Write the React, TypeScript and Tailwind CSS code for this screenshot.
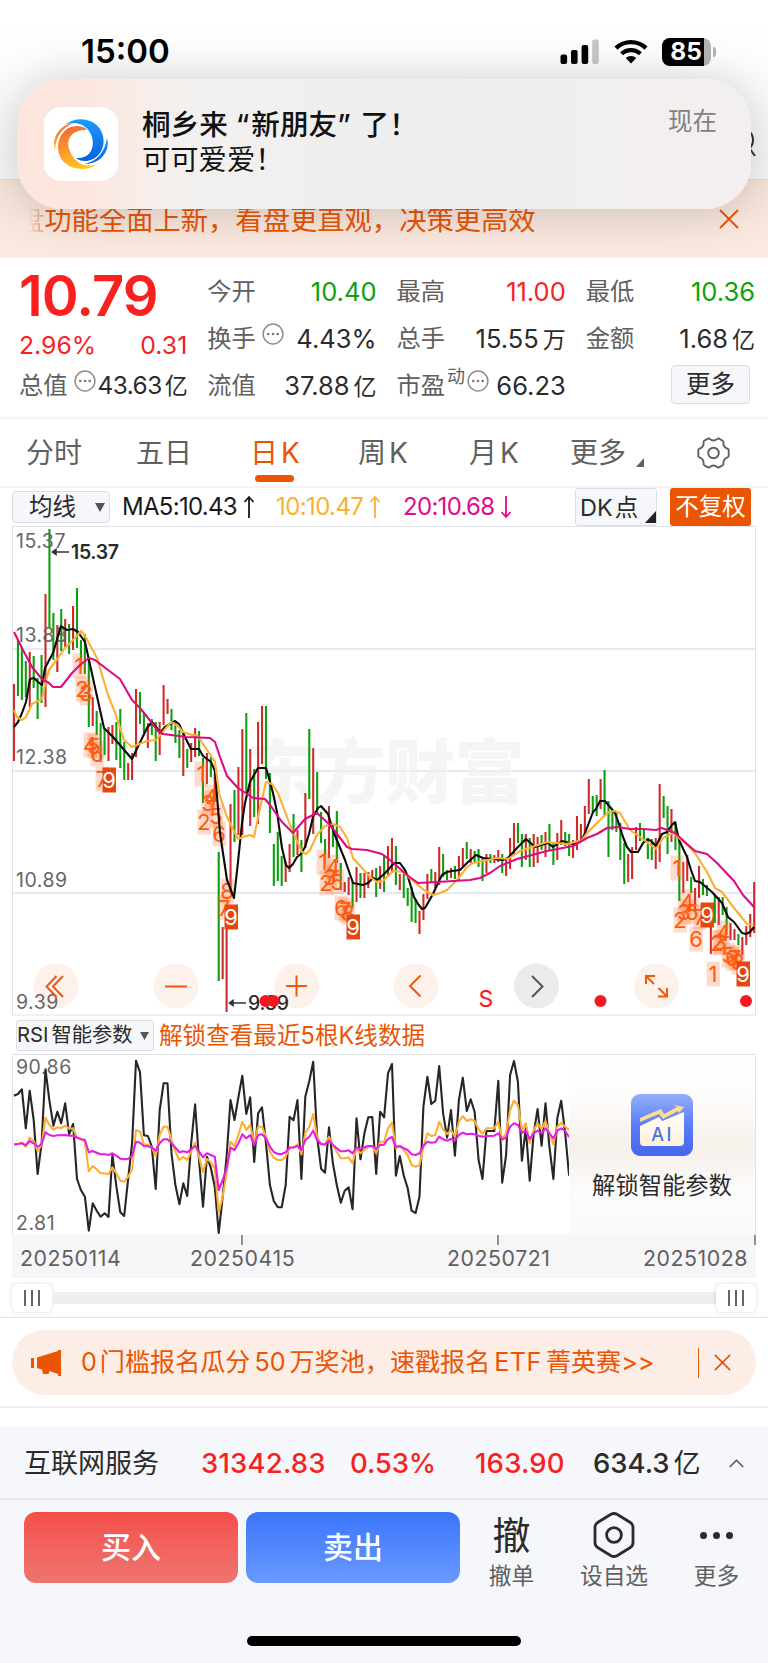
import React from 'react';

// 每根K线: 涨跌, 最高点, 最低点
const candles =
  'r684-761 g640-696 g647-700 g661-697 r652-707 g656-688 g678-719 g655-703 r594-707 g529-628 g613-660 r625-672 g609-651 r619-647 g624-654 r606-650 g588-648 g640-668 g634-674 g660-727 r697-726 g711-735 g723-762 g728-755 r727-761 r725-744 g722-760 g709-768 g742-780 r763-780 r753-780 r689-757 g692-724 g712-733 r723-748 g719-735 g722-761 r722-755 r685-725 r699-714 g709-730 g721-743 g730-758 r732-776 g749-768 r743-762 r728-757 g731-756 g758-803 r753-784 g757-777 r772-800 g852-981 r927-979 r923-1012 r804-890 g790-842 r767-835 r729-835 g713-793 r749-826 g769-817 r722-824 r706-764 g706-779 g773-833 g844-886 g832-881 g856-886 r862-882 r844-872 g814-857 r830-855 g840-872 r793-848 g729-799 r748-834 g772-815 g812-843 g839-864 r806-858 g825-847 g811-863 g863-890 r882-892 r877-895 g882-908 r867-902 g873-898 r873-898 r872-888 r870-880 g868-897 r866-889 g855-892 r846-875 r838-873 g846-885 r874-890 g874-898 g888-906 g887-922 g899-923 r911-934 r894-920 r874-899 g869-883 r872-888 r847-885 g854-877 g870-880 r868-878 g866-879 r856-880 r848-867 g842-859 r849-863 g851-862 g849-867 g859-881 r854-873 g854-863 r855-863 r850-862 g854-873 r858-876 r838-869 r823-854 g823-843 g834-867 r834-860 g838-867 r834-867 r837-863 g835-850 r832-857 g824-850 g843-865 r833-860 r820-845 g832-846 g834-856 r840-858 r816-850 r824-840 r806-837 r779-814 g796-812 g795-816 r779-809 g770-816 g801-857 g811-830 g813-832 g823-860 g843-884 r854-882 r847-879 r827-850 g823-841 g829-843 g838-859 g839-860 r838-869 r784-862 g796-818 g806-854 r809-842 g822-850 g837-901 r862-893 r855-881 g877-893 r888-912 r866-898 g879-895 g885-896 r927-954 g894-923 r897-925 g897-915 g907-935 r923-940 r929-940 g934-945 r937-955 r926-945 r914-937 r882-933'
    .split(' ')
    .map((s) => {
      const [top, bottom] = s.slice(1).split('-').map(Number);
      return { up: s[0] === 'r', top, bottom };
    });

const ma5 =
  '14,727 18,722 22,713 26,702 30,679 34,678 38,682 42,685 45,668 53,653 61,626 67,630 73,629 78,632 85,642 104,728 113,737 132,759 147,728 152,722 157,728 160,733 165,727 175,721 179,724 185,737 191,749 199,749 203,756 211,762 215,771 220,833 227,880 234,898 238,862 242,823 245,803 250,782 254,775 258,768 266,768 269,778 273,793 277,812 282,848 286,865 289,868 293,864 297,857 301,854 305,847 309,834 313,817 318,808 321,806 328,814 334,833 345,860 353,883 363,885 368,883 373,878 377,880 383,875 388,870 394,863 400,863 405,870 408,877 414,897 418,904 422,909 425,908 433,894 438,883 442,875 447,872 452,871 460,870 468,862 476,855 483,858 503,860 508,858 517,848 526,839 535,847 548,843 553,847 562,841 573,844 582,840 585,833 593,812 596,809 600,801 605,801 615,813 619,824 623,837 627,847 631,852 638,852 643,843 648,839 652,842 656,846 662,834 667,832 672,825 675,822 679,840 687,857 691,870 695,881 700,882 712,892 722,903 728,917 734,922 742,933 746,934 750,932 754,927';
const ma10 =
  '14,710 17,717 22,720 26,717 32,704 42,699 45,685 49,670 58,658 65,648 75,638 81,631 85,636 97,658 108,695 116,715 124,740 132,747 147,741 156,740 171,722 178,726 183,732 192,735 197,735 207,750 215,762 219,793 227,817 238,839 243,837 250,835 254,837 260,808 266,782 272,784 278,793 290,825 302,852 306,854 310,850 317,835 325,826 333,824 340,827 347,838 353,858 362,868 370,877 377,882 383,881 393,871 403,872 412,880 424,890 433,895 440,893 447,890 457,880 467,867 473,863 483,861 497,858 508,859 520,851 547,842 567,844 582,840 588,832 603,817 609,812 615,811 620,813 630,830 640,837 648,843 656,849 663,838 673,833 687,845 695,853 707,872 715,888 722,892 734,908 747,924 754,925';
const ma20 =
  '14,632 23,650 32,667 42,679 49,683 53,687 61,687 72,673 80,665 89,658 95,660 108,670 120,679 132,700 140,708 148,718 158,731 163,734 187,737 210,738 215,742 220,757 227,776 238,788 253,798 265,799 270,805 282,822 293,833 305,819 317,813 330,825 347,847 352,849 367,850 382,854 390,860 407,875 418,883 437,882 470,880 480,878 490,873 500,866 517,859 547,851 573,846 587,838 597,834 607,828 618,827 630,829 643,829 656,830 662,828 675,833 687,844 695,851 707,854 717,863 734,881 743,895 754,907';

// 九转序列标记 [数字, x, y]
const signals: [number, number, number][] = [
  [1, 79, 666], [2, 82, 689], [3, 86, 693], [4, 90, 745], [5, 94, 746], [6, 97, 754], [7, 102, 779], [9, 109, 780],
  [1, 201, 774], [2, 204, 822], [3, 208, 803], [4, 211, 797], [5, 216, 816], [6, 219, 834], [8, 227, 891], [7, 224, 908], [9, 231, 917],
  [1, 323, 862], [2, 326, 883], [3, 330, 877], [4, 333, 867], [5, 337, 882], [6, 341, 908], [7, 345, 910], [8, 348, 913], [9, 353, 927],
  [1, 677, 868], [2, 680, 920], [3, 684, 912], [4, 687, 902], [5, 692, 912], [6, 696, 939], [7, 700, 917], [9, 707, 915],
  [1, 713, 974], [2, 717, 943], [3, 720, 942], [4, 723, 933], [5, 728, 955], [6, 732, 958], [7, 735, 958], [8, 738, 962], [9, 743, 974]
];

const rsi6 = [257,252,238,355,242,330,492,400,178,272,347,305,340,280,373,342,507,540,560,662,580,602,620,610,621,435,530,607,618,505,400,152,187,376,378,410,537,300,220,220,430,525,583,520,558,400,283,450,590,440,473,530,669,560,440,270,330,262,197,312,262,456,310,292,400,525,573,592,592,525,320,331,270,507,260,213,155,380,476,488,352,460,525,578,542,532,598,325,448,370,322,321,492,305,322,190,162,497,438,497,535,602,609,560,290,200,282,272,168,310,383,300,437,270,203,303,268,305,450,507,363,363,363,212,518,435,195,153,215,452,355,512,370,297,407,280,410,507,325,272,370,497];
const rsi12 = [404,402,398,410,383,393,423,405,323,345,359,352,354,347,356,355,382,388,395,484,468,478,490,490,493,472,490,512,515,500,478,360,365,403,405,412,438,375,350,350,390,425,450,440,450,425,398,440,487,447,457,475,607,560,490,395,408,375,335,360,345,400,350,350,380,425,443,450,450,440,412,414,403,433,370,350,312,380,403,405,380,405,425,445,445,442,460,415,430,420,410,408,430,395,395,355,338,415,408,420,435,465,470,465,410,370,378,375,335,358,372,360,380,335,318,333,328,333,358,372,355,355,355,335,390,370,300,272,285,360,340,400,360,340,358,333,370,403,350,338,350,360];
const rsi24 = [403,402,400,406,393,400,410,403,367,375,378,376,376,375,377,377,383,387,390,427,423,428,433,433,435,430,437,446,448,446,438,395,398,408,409,413,422,400,388,388,400,413,427,424,427,418,408,425,442,430,435,440,540,510,475,413,420,400,373,385,375,405,375,373,385,410,426,432,432,427,413,412,408,420,390,380,362,390,402,403,392,405,415,424,424,421,430,412,418,412,408,408,417,405,404,387,381,411,408,415,420,433,435,430,408,395,398,397,380,388,392,387,392,375,368,373,371,373,377,380,378,378,377,370,388,383,350,340,345,368,362,387,370,362,370,355,370,385,362,355,363,382];

const barX = (i: number) => 14 + i * 3.937;
const toPoints = (data: number[]) => data.map((v, i) => `${barX(i).toFixed(1)},${(1010 + v / 3).toFixed(1)}`).join(' ');

const MoreDots = ({ className = '' }: { className?: string }) => (
  <svg className={className} width="22" height="22" viewBox="0 0 22 22">
    <circle cx="11" cy="11" r="9.9" fill="none" stroke="#8e8e8e" strokeWidth="1.5" />
    <circle cx="6.3" cy="11" r="1.3" fill="#777" />
    <circle cx="11" cy="11" r="1.3" fill="#777" />
    <circle cx="15.7" cy="11" r="1.3" fill="#777" />
  </svg>
);

const Cross = ({ size }: { size: number }) => (
  <svg width={size} height={size} viewBox="0 0 20 20" fill="none" stroke="#ea5504" strokeWidth="1.9">
    <path d="M1 1L19 19M19 1L1 19" />
  </svg>
);

const StatusBar = () => (
  <div className="flex h-[103px] items-center justify-between pl-[81px] pr-[52px]">
    <span className="text-[33px] font-semibold leading-none text-black">15:00</span>
    <div className="flex items-center">
      <svg width="40" height="26" viewBox="0 0 40 26">
        <rect x="0.5" y="15.5" width="6.6" height="9.5" rx="2" />
        <rect x="11" y="11" width="6.6" height="14" rx="2" />
        <rect x="21.6" y="6" width="6.6" height="19" rx="2" />
        <rect x="32.2" y="0.5" width="6.6" height="24.5" rx="2" fill="#c6c6c6" />
      </svg>
      <svg className="ml-3.5" width="34" height="25" viewBox="0 0 34 25" fill="none" stroke="#000">
        <path d="M2 9.2A21.5 21.5 0 0 1 32 9.2" strokeWidth="4.4" />
        <path d="M7.6 14.8A13.6 13.6 0 0 1 26.4 14.8" strokeWidth="4.2" />
        <path d="M17 24.5L11.7 19A7.8 7.8 0 0 1 22.3 19Z" fill="#000" stroke="none" />
      </svg>
      <div className="ml-3.5 flex items-center">
        <div className="flex h-7 w-[49px] items-center overflow-hidden rounded-[8px] bg-[#b4b4b4]">
          <span className="flex h-7 w-[42px] items-center justify-center bg-black pl-1.5 text-[24.5px] font-bold leading-none text-white">85</span>
        </div>
        <div className="ml-0.5 h-2.5 w-[3px] rounded-r-full bg-[#b4b4b4]" />
      </div>
    </div>
  </div>
);

const Notification = () => (
  <div className="absolute left-[17px] top-[79px] z-10 flex h-[130px] w-[734px] rounded-[46px] bg-[linear-gradient(90deg,#fde5dc_0%,#fbe8e1_11%,#f3f1f0_23%,#eeeeee_50%,#f1eeee_72%,#f3efef_100%)] pl-[27px] pr-[34px] pt-7 shadow-[0_2px_48px_rgba(0,0,0,0.19)]">
    <div className="flex h-[74px] w-[74px] items-center justify-center rounded-[17px] bg-white">
      <svg width="58" height="52" viewBox="0 0 58 52">
        <defs>
          <linearGradient id="logoBlue" x1="0" y1="0" x2="0" y2="1">
            <stop offset="0" stopColor="#1a9cff" />
            <stop offset="1" stopColor="#0a5fe0" />
          </linearGradient>
          <linearGradient id="logoOrange" x1="0" y1="0" x2="0.3" y2="1">
            <stop offset="0" stopColor="#f0603c" />
            <stop offset="1" stopColor="#ffc21f" />
          </linearGradient>
        </defs>
        <path d="M13 7C23 -2 41 0 48 11C57 25 48 43 33 43C29 43 26 42 24 40C38 41 43 30 40 19C36 7 24 2 13 7Z" fill="url(#logoBlue)" />
        <path d="M55 20C59 33 48 46 33 46C45 43 53 34 55 20Z" fill="url(#logoBlue)" />
        <path d="M45 46C35 54 18 52 10 42C1 29 8 9 24 8C29 8 33 9 35 12C20 11 14 21 17 31C21 44 33 51 45 46Z" fill="url(#logoOrange)" />
        <path d="M3 32C-1 19 9 6 22 5C11 9 4 18 3 32Z" fill="url(#logoOrange)" />
      </svg>
    </div>
    <div className="ml-[24px] flex flex-1 flex-col text-[28.6px] leading-9 text-[#111]">
      <span className="font-medium">桐乡来<span className="ml-2 mr-0.5">“</span>新朋友<span className="mr-2.5">”</span>了！</span>
      <span className="text-[28.3px] leading-[35px]">可可爱爱！</span>
    </div>
    <span className="mt-0.5 text-[24.5px] leading-6 text-[#828080]">现在</span>
  </div>
);

const Header = () => (
  <header className="relative">
    <div className="h-[180px] border-b border-[#dcdee0] bg-[linear-gradient(180deg,#fff_0%,#fff_12%,#fafafa_60%,#f6f6f7_100%)]">
      <StatusBar />
      <div className="flex justify-end pr-[12px] pt-6">
        <svg width="26" height="30" viewBox="0 0 26 30" fill="none" stroke="#333" strokeWidth="2">
          <circle cx="11" cy="13" r="12" />
          <path d="M20 22L25 29" />
        </svg>
      </div>
    </div>
    <div className="flex h-[78px] items-center justify-between bg-[linear-gradient(180deg,#f7e4da,#fceae1)] pl-[17px] pr-[29px]">
      <p className="pt-[3px] text-[27.3px] leading-none text-[#ea5504]">
        <span className="bg-gradient-to-r from-transparent from-40% to-[#ea5504]/50 bg-clip-text text-transparent">盘</span>功能全面上新，看盘更直观，决策更高效
      </p>
      <Cross size={20} />
    </div>
    <Notification />
  </header>
);

const red = 'text-[#f8211f]';
const green = 'text-[#0ca30c]';
const dark = 'text-[#2b2b2b]';

const Cell = ({ label, value, unit, color, dots, sup, tight }: { label: string; value: string; unit?: string; color: string; dots?: boolean; sup?: string; tight?: boolean }) => (
  <div className="flex h-[47px] items-center justify-between whitespace-nowrap">
    <span className="flex items-center text-[24.3px] leading-none text-[#606060]">
      {label}
      {sup && <sup className="top-[-8px] ml-0.5 text-[18px] leading-none">{sup}</sup>}
      {dots && <MoreDots className={sup ? '-mt-2 ml-0.5' : '-mt-2 ml-1.5'} />}
    </span>
    <span className={`leading-none ${tight ? 'text-[24.4px] tracking-[-0.5px]' : 'text-[25.5px]'} ${color}`}>
      {value}
      {unit && <span className={`text-[23px] ${tight ? 'ml-[3px]' : 'ml-1'}`}>{unit}</span>}
    </span>
  </div>
);

const Quote = () => (
  <section className="grid h-[161px] grid-cols-4 gap-x-5 border-b-2 border-[#f2f3f5] pl-[18px] pr-[13px] pt-[10px]">
    <div className="pl-px">
      <div className={`flex h-[55px] items-center text-[56px] font-semibold leading-none tracking-[-0.9px] ${red}`}>10.79</div>
      <div className={`flex h-[39px] items-center justify-between pt-1.5 text-[24.8px] leading-none ${red}`}>
        <span>2.96%</span>
        <span>0.31</span>
      </div>
      <Cell label="总值" value="43.63" unit="亿" color={dark} dots tight />
    </div>
    <div>
      <Cell label="今开" value="10.40" color={green} />
      <Cell label="换手" value="4.43%" color={dark} dots />
      <Cell label="流值" value="37.88" unit="亿" color={dark} />
    </div>
    <div>
      <Cell label="最高" value="11.00" color={red} />
      <Cell label="总手" value="15.55" unit="万" color={dark} />
      <Cell label="市盈" value="66.23" color={dark} sup="动" dots />
    </div>
    <div>
      <Cell label="最低" value="10.36" color={green} />
      <Cell label="金额" value="1.68" unit="亿" color={dark} />
      <div className="flex h-[45px] items-center justify-end pr-[5px]">
        <button className="h-[39px] w-[79px] rounded-[4px] border border-[#dadde3] bg-[#f6f7fa] text-[24.5px] leading-none text-[#2b2b2b]">更多</button>
      </div>
    </div>
  </section>
);

const Tabs = () => (
  <nav className="flex h-[69px] items-center border-b-2 border-[#f2f3f5] pl-[26px] text-[28px] leading-none text-[#606060]">
    <span className="w-[110px]">分时</span>
    <span className="w-[114px]">五日</span>
    <span className="relative w-[108px] text-[#ea5504]">
      日<span className="ml-[3px]">K</span>
      <span className="absolute -bottom-[15px] left-[5px] h-[7px] w-[39px] rounded-full bg-[#ea5504]" />
    </span>
    <span className="w-[111px]">周<span className="ml-[3px]">K</span></span>
    <span className="w-[101px]">月<span className="ml-[3px]">K</span></span>
    <span className="flex w-[127px] items-end">
      更多
      <svg className="ml-2.5" width="8" height="9" viewBox="0 0 8 9"><path d="M8 0V9H0Z" fill="#606060" /></svg>
    </span>
    <svg width="33" height="32" viewBox="0 0 33 32" fill="none" stroke="#606060" strokeWidth="1.9" strokeLinejoin="round">
      <path d="M11 1.6Q12 1.2 12.8 2Q16.5 5 20.2 2Q21 1.2 22 1.6L25.8 3.8Q26.5 4.3 26.4 5.3Q26 10 30.5 11.6Q31.7 12.2 31.7 13.3V18.7Q31.7 19.8 30.5 20.4Q26 22 26.4 26.7Q26.5 27.7 25.8 28.2L22 30.4Q21 30.8 20.2 30Q16.5 27 12.8 30Q12 30.8 11 30.4L7.2 28.2Q6.5 27.7 6.6 26.7Q7 22 2.5 20.4Q1.3 19.8 1.3 18.7V13.3Q1.3 12.2 2.5 11.6Q7 10 6.6 5.3Q6.5 4.3 7.2 3.8Z" />
      <circle cx="16.5" cy="16" r="5.3" />
    </svg>
  </nav>
);

const Arrow = ({ up = false, color }: { up?: boolean; color: string }) => (
  <svg className="ml-1.5" width="12" height="24" viewBox="0 0 12 24" fill="none" stroke={color} strokeWidth="1.8">
    <path d={up ? 'M6 23V2M1.5 7L6 2L10.5 7' : 'M6 1V22M1.5 17L6 22L10.5 17'} />
  </svg>
);

const Legend = () => (
  <div className="flex h-[38px] items-center pl-3 text-[23.5px] leading-none">
    <button className="flex h-8 w-[98px] items-center justify-between rounded-[4px] border border-[#dadde3] bg-[#f6f7fa] pl-4 pr-1 text-[#2b2b2b]">
      均线
      <svg width="10" height="9" viewBox="0 0 10 9"><path d="M0 0H10L5 9Z" fill="#555" /></svg>
    </button>
    <span className="ml-3 flex w-[154px] items-center text-[24px] tracking-[-0.7px] text-[#1a1a1a]">MA5:10.43<Arrow up color="#1a1a1a" /></span>
    <span className="flex w-[127px] items-center text-[24px] tracking-[-0.6px] text-[#fbb034]">10:10.47<Arrow up color="#fbb034" /></span>
    <span className="flex w-[172px] items-center text-[24px] tracking-[-0.7px] text-[#e10b8c]">20:10.68<Arrow color="#e10b8c" /></span>
    <button className="flex h-[38px] w-[82px] items-end rounded-[3px] border border-[#dadde3] bg-[#f6f7fa] pl-1 text-[#2b2b2b]">
      <span className="mb-1.5 whitespace-nowrap">DK<span className="ml-0.5">点</span></span>
      <svg className="mb-0.5 ml-auto" width="11" height="12" viewBox="0 0 11 12"><path d="M11 0V12H0Z" fill="#222" /></svg>
    </button>
    <button className="ml-[13px] h-[38px] w-[81px] rounded-[3px] bg-[#ea5504] text-white">不复权</button>
  </div>
);

const KLineChart = () => (
  <svg className="ml-3 block" width="744" height="490" viewBox="12 526 744 490">
    <path d="M12 649H756M12 771H756M12 893H756" stroke="#e6eaef" strokeWidth="1.8" />
    <text x="246" y="798" fontSize="70" fontWeight="900" letterSpacing="-0.5" fill="#f5f5f6" fontFamily="'Noto Sans CJK SC', sans-serif">东方财富</text>
    <path d="M250 771H520" stroke="#e6eaef" strokeWidth="1.4" />
    <rect x="12.5" y="526.5" width="743" height="488.5" fill="none" stroke="#dfe2e6" />
    {[56, 176, 296.5, 416, 536.5, 656.5].map((x) => (
      <circle key={x} cx={x} cy="986" r="22.5" fill={x === 536.5 ? '#ebebeb' : '#fdf1eb'} />
    ))}
    {candles.map((c, i) => (
      <path key={i} d={`M${barX(i)} ${c.top}V${c.bottom}`} stroke={c.up ? '#cf2b2b' : '#0d9f0d'} strokeWidth="2.1" />
    ))}
    <g fontSize="19.5" letterSpacing="0.5" fill="#666">
      <text x="16" y="548">15.37</text>
      <text x="16" y="642">13.88</text>
      <text x="16" y="764">12.38</text>
      <text x="16" y="887">10.89</text>
      <text x="16" y="1009">9.39</text>
    </g>
    {signals.map(([n, x, y], i) => (
      <g key={i}>
        <rect x={x - 6.5} y={y - 12.5} width="13.5" height="25" fill={n === 9 ? '#e64610' : '#fb6a2b'} fillOpacity={n === 9 ? 1 : 0.24} />
        <text x={x} y={y + 7.8} fontSize="22" textAnchor="middle" fill={n === 9 ? '#fff' : '#ff5a0a'}>{n}</text>
      </g>
    ))}
    <g fill="none" strokeWidth="2.1" strokeLinejoin="round">
      <polyline points={ma5} stroke="#0a0a0a" />
      <polyline points={ma10} stroke="#fbb034" />
      <polyline points={ma20} stroke="#dd0b84" />
    </g>
    <g stroke="#333" strokeWidth="1.6" fill="#333">
      <path d="M69 552H56M56 549.5L52.5 552L56 554.5Z" />
      <path d="M246 1003H233M233 1000.5L229.5 1003L233 1005.5Z" />
    </g>
    <g fontSize="19.5" fontWeight="500" fill="#2b2b2b">
      <text x="71" y="559" fontWeight="600" textLength="48">15.37</text>
      <text x="248" y="1010" textLength="41">9.39</text>
    </g>
    <g fill="none" stroke="#f0590d" strokeWidth="2">
      <path d="M56.5 976L46.5 986.5L56.5 997M63 976L53 986.5L63 997" />
      <path d="M165 986.5H187" />
      <path d="M286 986H307M296.5 975.5V996.5" />
      <path d="M420.5 975.5L410 986L420.5 996.5" />
      <path d="M532 976L542.5 986.5L532 997" stroke="#555" />
      <path d="M646 984V976H655M646.5 976.5L654 984M667 988V996.5H658M666.5 996L658.5 988" />
    </g>
    <g fill="#f5191f">
      <circle cx="265.5" cy="1001" r="6" />
      <circle cx="273.5" cy="1001" r="6" />
      <circle cx="600.5" cy="1001" r="6" />
      <circle cx="746" cy="1001" r="6" />
      <text x="486" y="1007" fontSize="23" textAnchor="middle">S</text>
    </g>
  </svg>
);

const RsiPanel = () => (
  <section className="px-3">
    <div className="flex h-[38px] items-center pl-[4px] pt-px">
      <button className="flex h-[31px] w-[138px] items-center justify-between rounded-[3px] border border-[#dadde3] bg-[#f6f7fa] pr-1 text-[20.3px] leading-none text-[#2b2b2b]">
        <span>RSI<span className="ml-[3px]">智能参数</span></span>
        <svg width="9" height="8" viewBox="0 0 9 8"><path d="M0 0H9L4.5 8Z" fill="#555" /></svg>
      </button>
      <span className="ml-[5px] text-[23.6px] leading-none text-[#ea5504]">解锁查看最近5根K线数据</span>
    </div>
    <div className="flex h-[181px] border border-b-0 border-[#dfe2e6]">
      <svg width="556" height="180" viewBox="13 1055 556 180">
        <g fontSize="19.5" letterSpacing="0.5" fill="#666">
          <text x="16" y="1074">90.86</text>
          <text x="16" y="1230">2.81</text>
        </g>
        <g fill="none" strokeWidth="2.1" strokeLinejoin="round">
          <polyline points={toPoints(rsi6)} stroke="#262626" />
          <polyline points={toPoints(rsi12)} stroke="#fbb034" />
          <polyline points={toPoints(rsi24)} stroke="#e81be8" />
        </g>
      </svg>
      <div className="flex flex-1 flex-col items-center bg-[linear-gradient(180deg,#fff_0%,#fdfcfb_25%,#f6f0ea_52%,#fcfbfa_75%,#fafafb_100%)] pt-[39px]">
        <svg width="62" height="62" viewBox="0 0 62 62">
          <defs>
            <linearGradient id="aiBg" x1="0" y1="0" x2="0" y2="1">
              <stop offset="0" stopColor="#93aefb" />
              <stop offset="0.5" stopColor="#5c7df7" />
              <stop offset="1" stopColor="#4566ee" />
            </linearGradient>
            <linearGradient id="aiCard" x1="0" y1="0" x2="0" y2="1">
              <stop offset="0" stopColor="#fff" />
              <stop offset="1" stopColor="#fdf0d8" />
            </linearGradient>
          </defs>
          <rect width="62" height="62" rx="9" fill="url(#aiBg)" />
          <path d="M9 32L28 23L31 27L53 18V48Q53 52 49 52H13Q9 52 9 48Z" fill="url(#aiCard)" />
          <path d="M9 24L30 15L33 20L46 13L43 11L53 13L48 19L47 17L32 25L28 20L9 28Z" fill="#fbdc94" />
          <text x="31.5" y="47" fontSize="18" fontWeight="500" textAnchor="middle" letterSpacing="2.5" fill="#4c6ff0">AI</text>
        </svg>
        <span className="mt-[18px] text-[23.3px] leading-none text-[#2b2b2b]">解锁智能参数</span>
      </div>
    </div>
    <div className="h-[43px] bg-[#f6f6f9] text-[21.3px] tracking-[0.55px] text-[#606060]">
      <div className="flex h-2.5">
        <div className="ml-[229px] w-0.5 bg-[#909090]" />
        <div className="ml-[254px] w-0.5 bg-[#909090]" />
        <div className="ml-auto w-0.5 bg-[#909090]" />
      </div>
      <div className="flex pl-2 pt-[3px] leading-none">
        <span className="w-[170px]">20250114</span>
        <span className="w-[257px]">20250415</span>
        <span className="w-[196px]">20250721</span>
        <span>20251028</span>
      </div>
    </div>
  </section>
);

const Handle = () => (
  <div className="flex h-7 w-10 items-center justify-center gap-[5px] rounded-[6px] bg-white shadow-[0_0_4px_rgba(0,0,0,0.16)]">
    <i className="h-4 w-0.5 bg-[#666]" />
    <i className="h-4 w-0.5 bg-[#666]" />
    <i className="h-4 w-0.5 bg-[#666]" />
  </div>
);

const Promo = () => (
  <div className="h-[90px] border-b-2 border-[#eeeff1] px-3 pt-3">
    <div className="flex h-[65px] items-center rounded-full bg-[#fcede6] pl-[19px] pr-[25px] text-[#ea5504]">
      <svg width="30" height="26" viewBox="0 0 30 26" fill="#ea5504">
        <path d="M0 8H3V18H0ZM6 7.5L27 1V0H30V26H27V24L18.5 21L17.5 24H12L11 19.5L6 18Z" />
      </svg>
      <span className="ml-5 flex-1 whitespace-nowrap pt-px text-[25.1px] leading-none">
        0<span className="ml-[3px]">门槛报名瓜分</span><span className="mx-1">50</span>万奖池，速戳报名<span className="mx-1 tracking-[0.5px]">ETF</span>菁英赛&gt;&gt;
      </span>
      <span className="mr-[15px] h-[30px] w-px bg-[#ea5504]" />
      <Cross size={17} />
    </div>
  </div>
);

const IndexRow = () => (
  <div className="flex h-[73px] items-center border-b-2 border-[#e3e5e8] pl-[24px] pt-0.5 text-[27.5px] font-medium leading-none">
    <span className="w-[177px] text-[27px] font-normal text-[#2b2b2b]">互联网服务</span>
    <span className={`w-[149px] tracking-[0.2px] ${red}`}>31342.83</span>
    <span className={`w-[125px] tracking-[-0.1px] ${red}`}>0.53%</span>
    <span className={`w-[118px] tracking-[0.2px] ${red}`}>163.90</span>
    <span className="w-[136px] text-[#2b2b2b]">634.3<span className="ml-1 text-[27px] font-normal">亿</span></span>
    <svg width="15" height="9" viewBox="0 0 15 9" fill="none" stroke="#555" strokeWidth="1.6"><path d="M0.8 8L7.5 1.3L14.2 8" /></svg>
  </div>
);

const BottomBar = () => (
  <div className="flex h-[136px] items-start pl-6 pt-3">
    <button className="h-[71px] w-[214px] rounded-[12px] bg-gradient-to-b from-[#f44e4a] to-[#ee7570] text-[30px] font-medium text-white">买入</button>
    <button className="ml-2 h-[71px] w-[214px] rounded-[12px] bg-gradient-to-b from-[#3a75fa] to-[#6a98ff] text-[30px] font-medium text-white">卖出</button>
    <div className="ml-[29px] flex w-[45px] flex-col items-center text-[22.7px] leading-none text-[#606060]">
      <span className="flex h-[46px] items-center text-[38px] leading-none text-[#2b2b2b]">撤</span>
      <span className="mt-[7px] whitespace-nowrap">撤单</span>
    </div>
    <div className="ml-[46px] flex w-[68px] flex-col items-center text-[22.7px] leading-none text-[#606060]">
      <svg width="42" height="46" viewBox="0 0 42 46" fill="none" stroke="#2b2b2b" strokeWidth="2.8" strokeLinejoin="round">
        <path d="M18 2.3Q21 0.7 24 2.3L37 10.2Q40 12 40 15.2V30.8Q40 34 37 35.8L24 43.7Q21 45.3 18 43.7L5 35.8Q2 34 2 30.8V15.2Q2 12 5 10.2Z" />
        <circle cx="21" cy="23" r="7.4" />
      </svg>
      <span className="mt-[7px] whitespace-nowrap">设自选</span>
    </div>
    <div className="ml-[46px] flex w-[45px] flex-col items-center text-[22.7px] leading-none text-[#606060]">
      <span className="flex h-[46px] items-center gap-1.5">
        <i className="h-[7px] w-[7px] rounded-full bg-[#2b2b2b]" />
        <i className="h-[7px] w-[7px] rounded-full bg-[#2b2b2b]" />
        <i className="h-[7px] w-[7px] rounded-full bg-[#2b2b2b]" />
      </span>
      <span className="mt-[7px] whitespace-nowrap">更多</span>
    </div>
  </div>
);

const App = () => {
  return (
    <div className="h-[1663px] w-[768px] overflow-hidden bg-white font-[Inter,'Noto_Sans_CJK_SC',sans-serif]">
      <Header />
      <Quote />
      <Tabs />
      <Legend />
      <KLineChart />
      <RsiPanel />
      {/* 区间滑块 */}
      <div className="flex h-10 items-center border-b border-[#e0e2e6] px-3">
        <Handle />
        <div className="h-3 flex-1 bg-[#efeff2]" />
        <Handle />
      </div>
      <Promo />
      <div className="mt-[19px] bg-[#f6f7fa]">
        <IndexRow />
        <BottomBar />
        <div className="flex h-[28px] justify-center bg-[#f6f7fa]">
          <div className="h-2.5 w-[274px] rounded-full bg-black" />
        </div>
      </div>
    </div>
  );
};

export default App;
